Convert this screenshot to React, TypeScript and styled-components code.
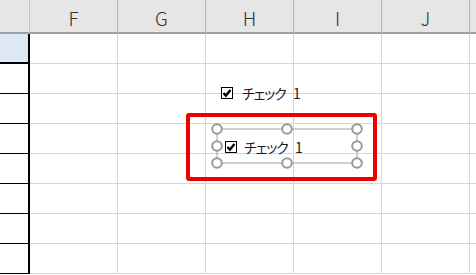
import React, { FC } from 'react';
import styled, { createGlobalStyle } from 'styled-components';

const GlobalStyle = createGlobalStyle`
  html, body {
    margin: 0;
    padding: 0;
    background: #ffffff;
    overflow: hidden;
  }
`;

const columns = ['F', 'G', 'H', 'I', 'J', ''];
const rowCount = 8;

const Sheet = styled.div`
  position: relative;
  width: 476px;
  height: 275px;
  overflow: hidden;
  display: grid;
  grid-template-columns: 30px repeat(6, 88px);
  grid-template-rows: 34px repeat(${rowCount}, 30px);
  font-family: 'Noto Sans CJK JP', 'Liberation Sans', sans-serif;
`;

const Corner = styled.div`
  background: #e6e6e6;
  border-bottom: 2px solid #a0a0a0;
  border-right: 1px solid #c4c4c4;
  box-sizing: border-box;
`;

const ColHeader = styled.div`
  background: #e6e6e6;
  border-bottom: 2px solid #a0a0a0;
  border-right: 1px solid #b4b4b4;
  box-sizing: border-box;
  display: flex;
  align-items: center;
  justify-content: center;
  padding-top: 2px;
  font-size: 19px;
  font-weight: 300;
  color: #333333;
`;

const RowHeader = styled.div<{ selected: boolean }>`
  background: ${(p) => (p.selected ? '#dde8f4' : '#ffffff')};
  border-right: 2px solid #000000;
  border-bottom: ${(p) => (p.selected ? '2px' : '1px')} solid #000000;
  box-sizing: border-box;
`;

const Cell = styled.div`
  border-right: 1px solid #d6d6d6;
  border-bottom: 1px solid #d6d6d6;
  box-sizing: border-box;
`;

const Control = styled.div<{ gap: number }>`
  position: absolute;
  display: flex;
  align-items: center;
  gap: ${(p) => p.gap}px;
`;

const Box = styled.div`
  width: 12px;
  height: 12px;
  border: 1px solid #000000;
  background: #ffffff;
  box-sizing: border-box;
  display: flex;
  align-items: center;
  justify-content: center;
`;

const Label = styled.span`
  font-family: 'Noto Sans CJK JP', sans-serif;
  font-feature-settings: 'palt';
  font-size: 14px;
  line-height: 14px;
  letter-spacing: -1px;
  word-spacing: 5px;
  color: #1a1a1a;
  white-space: nowrap;
`;

const Handles = styled.svg`
  position: absolute;
  left: 208px;
  top: 120px;
  overflow: visible;
`;

const Highlight = styled.div`
  position: absolute;
  left: 186px;
  top: 113px;
  width: 191px;
  height: 68px;
  border: 4px solid #ee0000;
  border-radius: 3px;
  box-sizing: border-box;
`;

const Check: FC = () => (
  <svg width="10" height="10" viewBox="0 0 10 10">
    <path d="M1.5 5 L3.9 7.6 L8.5 2" fill="none" stroke="#000" strokeWidth="2.4" />
  </svg>
);

const CheckBox: FC<{ left: number; top: number; gap: number }> = ({ left, top, gap }) => (
  <Control gap={gap} style={{ left, top }}>
    <Box>
      <Check />
    </Box>
    <Label>チェック 1</Label>
  </Control>
);

const App: FC = () => {
  // handle centres relative to the Handles svg origin
  const xs = [9, 79, 149];
  const ys = [9, 26, 43];
  const handles = [
    [xs[0], ys[0]], [xs[1], ys[0]], [xs[2], ys[0]],
    [xs[0], ys[1]], [xs[2], ys[1]],
    [xs[0], ys[2]], [xs[1], ys[2]], [xs[2], ys[2]],
  ];

  return (
    <>
      <GlobalStyle />
      <Sheet>
        <Corner />
        {columns.map((c, i) => (
          <ColHeader key={`h${i}`}>{c}</ColHeader>
        ))}
        {Array.from({ length: rowCount }).map((_, r) => (
          <React.Fragment key={r}>
            <RowHeader selected={r === 0} />
            {columns.map((_, c) => (
              <Cell key={c} />
            ))}
          </React.Fragment>
        ))}

        <CheckBox left={221} top={86} gap={9} />
        <CheckBox left={225} top={140} gap={7} />

        <Handles width="160" height="52">
          <line x1={xs[0]} y1={ys[0]} x2={xs[2]} y2={ys[0]} stroke="#a0a0a0" strokeWidth="1" />
          <line x1={xs[0]} y1={ys[2]} x2={xs[2]} y2={ys[2]} stroke="#a0a0a0" strokeWidth="1" />
          <line x1={xs[0]} y1={ys[0]} x2={xs[0]} y2={ys[2]} stroke="#a0a0a0" strokeWidth="1" />
          <line x1={xs[2]} y1={ys[0]} x2={xs[2]} y2={ys[2]} stroke="#a0a0a0" strokeWidth="1" />
          {handles.map(([x, y], i) => (
            <circle key={i} cx={x} cy={y} r="4.8" fill="#ffffff" stroke="#999999" strokeWidth="2" />
          ))}
        </Handles>

        <Highlight />
      </Sheet>
    </>
  );
};

export default App;
